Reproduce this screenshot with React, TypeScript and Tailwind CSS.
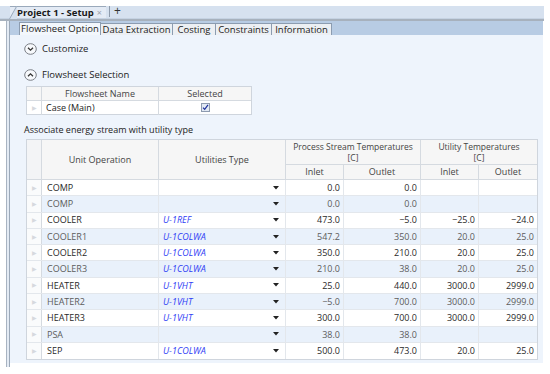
import React from 'react';

type Row = {
  op: string;
  util: string;
  pin: string;
  pout: string;
  uin: string;
  uout: string;
};

const rows: Row[] = [
  { op: 'COMP', util: '', pin: '0.0', pout: '0.0', uin: '', uout: '' },
  { op: 'COMP', util: '', pin: '0.0', pout: '0.0', uin: '', uout: '' },
  { op: 'COOLER', util: 'U-1REF', pin: '473.0', pout: '−5.0', uin: '−25.0', uout: '−24.0' },
  { op: 'COOLER1', util: 'U-1COLWA', pin: '547.2', pout: '350.0', uin: '20.0', uout: '25.0' },
  { op: 'COOLER2', util: 'U-1COLWA', pin: '350.0', pout: '210.0', uin: '20.0', uout: '25.0' },
  { op: 'COOLER3', util: 'U-1COLWA', pin: '210.0', pout: '38.0', uin: '20.0', uout: '25.0' },
  { op: 'HEATER', util: 'U-1VHT', pin: '25.0', pout: '440.0', uin: '3000.0', uout: '2999.0' },
  { op: 'HEATER2', util: 'U-1VHT', pin: '−5.0', pout: '700.0', uin: '3000.0', uout: '2999.0' },
  { op: 'HEATER3', util: 'U-1VHT', pin: '300.0', pout: '700.0', uin: '3000.0', uout: '2999.0' },
  { op: 'PSA', util: '', pin: '38.0', pout: '38.0', uin: '', uout: '' },
  { op: 'SEP', util: 'U-1COLWA', pin: '500.0', pout: '473.0', uin: '20.0', uout: '25.0' },
];

const tabs = ['Flowsheet Option', 'Data Extraction', 'Costing', 'Constraints', 'Information'];
const tabWidths = ['w-[82px]', 'w-[72px]', 'w-[43px]', 'w-[56px]', 'w-[60px]'];

function CircleChevron({ up }: { up?: boolean }) {
  return (
    <svg width="13" height="12" viewBox="0 0 13 12" className="shrink-0">
      <ellipse cx="6.5" cy="6" rx="5.8" ry="5.3" fill="#f7f9fc" stroke="#7b7f86" strokeWidth="1" />
      {up ? (
        <path d="M4 7.2 L6.5 4.8 L9 7.2" fill="none" stroke="#333" strokeWidth="1.3" />
      ) : (
        <path d="M4 4.8 L6.5 7.2 L9 4.8" fill="none" stroke="#333" strokeWidth="1.3" />
      )}
    </svg>
  );
}

function RowMarker() {
  return <span className="text-[6px] text-[#d6d9de] leading-none">▶</span>;
}

function DropArrow() {
  return (
    <svg width="6" height="4" viewBox="0 0 6 4" className="shrink-0">
      <path d="M0 0 L6 0 L3 3.5 Z" fill="#222" />
    </svg>
  );
}

function App() {
  return (
    <div className="w-[550px] h-[374px] bg-white overflow-hidden text-[9px] text-[#333] font-['Open_Sans',sans-serif]">
      {/* document tab strip */}
      <div className="h-[6px]" />
      <div className="h-[13px] bg-[#d6e1ef] flex items-end w-[544px] border-b border-[#c5d2e2]">
        <div className="relative flex items-center h-[12px] ml-[10px] pl-[7px] pr-[4px] bg-[#e4ebf5] border-t border-[#9aa9bb]">
          <svg width="8" height="13" viewBox="0 0 8 13" className="absolute left-[-1px] top-[-1px]">
            <path d="M0 13 L8 0 L8 13 Z" fill="#d6e1ef" />
            <path d="M0.5 13 L7.5 0.5" stroke="#9aa9bb" strokeWidth="1" />
          </svg>
          <span className="font-bold text-[9.5px] text-[#1a1a1a] leading-none">Project 1 - Setup</span>
          <span className="ml-[3px] text-[9px] text-[#9aa3ad] leading-none">×</span>
        </div>
        <div className="h-[11px] w-px bg-[#8d9aab] ml-[3px] mb-[1px]" />
        <span className="ml-[4px] mb-[1px] text-[12px] leading-none text-[#333]">+</span>
      </div>
      <div className="h-[2px] w-[544px] bg-[#a7b1bd]" />

      {/* window body */}
      <div className="flex h-[346px] ml-[6px]">
        <div className="w-px bg-[#a8b3c1]" />
        <div className="w-[2px] bg-[#e4ebf4]" />
        <div className="w-px bg-[#9ba8b8]" />
        <div className="w-[533px] flex flex-col">
          {/* sub tabs */}
          <div className="h-[14px] bg-[#b8cce4] flex items-end pl-[9px]">
            {tabs.map((t, i) => (
              <div
                key={t}
                className={
                  i === 0
                    ? `${tabWidths[i]} h-[13px] bg-[#f3f7fc] border border-b-0 border-[#8c9cb0] flex items-center justify-center text-[9.5px] text-[#222] leading-none`
                    : `${tabWidths[i]} h-[12px] bg-[#eceff3] border border-l-0 border-b-0 border-[#8c9cb0] flex items-center justify-center text-[9.5px] text-[#222] leading-none`
                }
              >
                {t}
              </div>
            ))}
          </div>

          {/* content */}
          <div className="h-[328px] bg-[#eef4fc] pl-[13px] pt-[8px]">
            <div className="flex items-center h-[12px] ml-[1px] gap-[5px]">
              <CircleChevron />
              <span className="text-[9.5px] text-[#222]">Customize</span>
            </div>
            <div className="flex items-center h-[12px] mt-[14px] ml-[1px] gap-[5px]">
              <CircleChevron up />
              <span className="text-[9.5px] text-[#222]">Flowsheet Selection</span>
            </div>

            {/* flowsheet table */}
            <div className="mt-[5px] ml-[3px] w-[226px] border border-[#cfd5dd] bg-white">
              <div className="grid grid-cols-[15px_117px_92px] h-[14px] bg-[#f6f6f6] border-b border-[#d5dae0]">
                <div className="border-r border-[#d5dae0]" />
                <div className="border-r border-[#d5dae0] flex items-center justify-center text-[#444]">Flowsheet Name</div>
                <div className="flex items-center justify-center text-[#444]">Selected</div>
              </div>
              <div className="grid grid-cols-[15px_117px_92px] h-[13px]">
                <div className="border-r border-[#d5dae0] flex items-center justify-center">
                  <RowMarker />
                </div>
                <div className="border-r border-[#d5dae0] flex items-center pl-[4px] text-[#222]">Case (Main)</div>
                <div className="flex items-center justify-center">
                  <svg width="9" height="9" viewBox="0 0 9 9">
                    <rect x="0.5" y="0.5" width="8" height="8" fill="#e2e9f3" stroke="#8e9bb0" />
                    <path d="M2 4.6 L3.7 6.4 L7 1.8" fill="none" stroke="#1c2f9c" strokeWidth="1.2" />
                  </svg>
                </div>
              </div>
            </div>

            <div className="mt-[9px] ml-[1px] h-[12px] flex items-center text-[9px] text-[#222]">
              Associate energy stream with utility type
            </div>

            {/* energy stream table */}
            <div className="mt-[3px] ml-[3px] w-[512px] border border-[#cfd5dd] bg-white">
              <div className="grid grid-cols-[15px_117px_127px_58px_77px_58px_58px] grid-rows-[25px_14px] bg-[#f6f6f6] text-[#444] border-b border-[#d5dae0]">
                <div className="row-span-2 border-r border-[#d5dae0] bg-[#f3f4f6]" />
                <div className="row-span-2 border-r border-[#d5dae0] flex items-center justify-center">Unit Operation</div>
                <div className="row-span-2 border-r border-[#d5dae0] flex items-center justify-center">Utilities Type</div>
                <div className="col-span-2 border-r border-b border-[#d5dae0] flex flex-col items-center justify-center leading-[11px] text-[8.5px]">
                  <span>Process Stream Temperatures</span>
                  <span>[C]</span>
                </div>
                <div className="col-span-2 border-b border-[#d5dae0] flex flex-col items-center justify-center leading-[11px] text-[8.5px]">
                  <span>Utility Temperatures</span>
                  <span>[C]</span>
                </div>
                <div className="border-r border-[#d5dae0] flex items-center justify-center">Inlet</div>
                <div className="border-r border-[#d5dae0] flex items-center justify-center">Outlet</div>
                <div className="border-r border-[#d5dae0] flex items-center justify-center">Inlet</div>
                <div className="flex items-center justify-center">Outlet</div>
              </div>
              {rows.map((r, i) => {
                const alt = i % 2 === 1;
                return (
                  <div
                    key={i}
                    className={`grid grid-cols-[15px_117px_127px_58px_77px_58px_58px] h-[16.3px] ${
                      alt ? 'bg-[#e9f1fb] text-[#5c5c5c]' : 'bg-white text-[#2a2a2a]'
                    } ${i < rows.length - 1 ? 'border-b border-[#e3e7ec]' : ''}`}
                  >
                    <div className="border-r border-[#d5dae0] flex items-center justify-center bg-[#fafbfc]">
                      <RowMarker />
                    </div>
                    <div className="border-r border-[#e3e7ec] flex items-center pl-[5px]">{r.op}</div>
                    <div className="border-r border-[#e3e7ec] flex items-center justify-between pl-[4px] pr-[6px]">
                      <span className="italic font-medium text-[#2f3df5] text-[9px]">{r.util}</span>
                      <DropArrow />
                    </div>
                    <div className="border-r border-[#e3e7ec] flex items-center justify-end pr-[3px]">{r.pin}</div>
                    <div className="border-r border-[#e3e7ec] flex items-center justify-end pr-[3px]">{r.pout}</div>
                    <div className="border-r border-[#e3e7ec] flex items-center justify-end pr-[3px]">{r.uin}</div>
                    <div className="flex items-center justify-end pr-[3px]">{r.uout}</div>
                  </div>
                );
              })}
            </div>
          </div>
        </div>
      </div>
    </div>
  );
}

export default App;
